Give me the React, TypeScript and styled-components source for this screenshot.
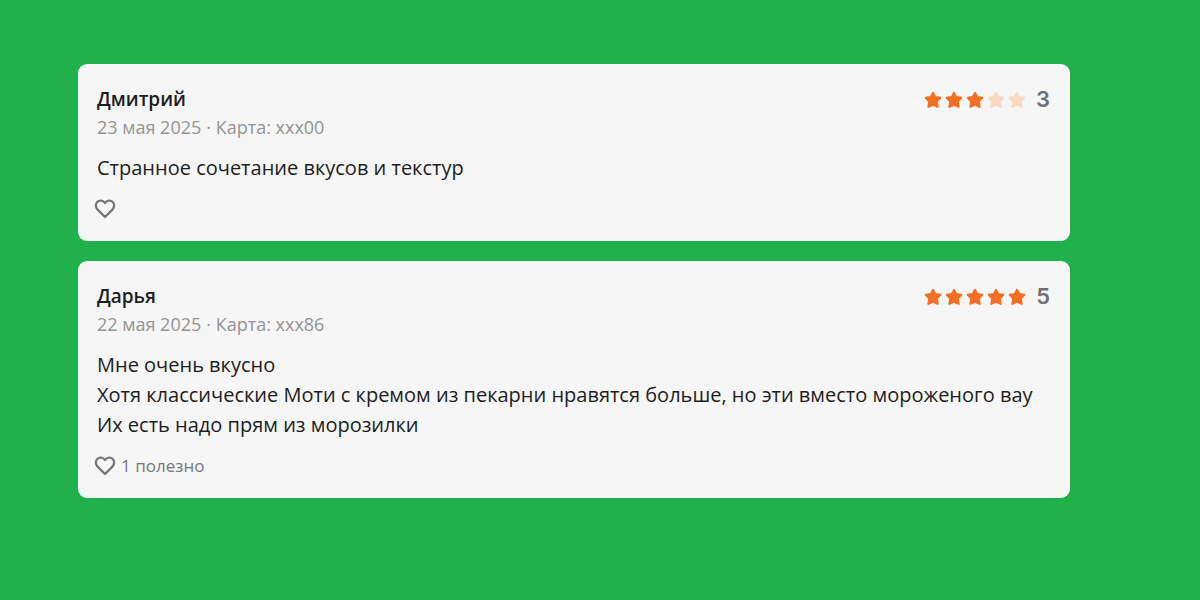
import React from "react";
import styled, { createGlobalStyle } from "styled-components";

const GlobalStyle = createGlobalStyle`
  *, *::before, *::after { box-sizing: border-box; }
  body {
    margin: 0;
    background: #21b14c;
    color: #1d1d1f;
    font-family: "Open Sans", "Noto Sans", sans-serif;
  }
`;

const ReviewList = styled.main`
  display: flex;
  flex-direction: column;
  gap: 20px;
  padding: 64px 130px 64px 78px;
`;

const Card = styled.article`
  padding: 21px 20px 20px 19px;
  border-radius: 9px;
  background: #f6f6f6;
`;

const CardHeader = styled.header`
  display: flex;
  justify-content: space-between;
  align-items: flex-start;
`;

const Author = styled.h2`
  margin: 0;
  font-size: 19px;
  line-height: 28px;
  font-weight: 600;
`;

const Meta = styled.p`
  display: flex;
  gap: 5px;
  margin: 0;
  color: #949494;
  font-size: 18px;
  line-height: 28px;
`;

const Rating = styled.div`
  display: flex;
  align-items: center;
  height: 28px;
`;

const Stars = styled.span`
  display: flex;
  gap: 3px;
  margin: 2px 10px 0 0;
`;

const StarIcon = styled.svg<{ $filled: boolean }>`
  display: block;
  width: 18px;
  height: 18px;
  color: ${(p) => (p.$filled ? "#f36f24" : "#f9d9c1")};
`;

const Score = styled.span`
  color: #6f6f73;
  font-family: Inter, "Liberation Sans", sans-serif;
  font-size: 22px;
  line-height: 28px;
  font-weight: 600;
`;

const Body = styled.p`
  margin: 12px 0 14px;
  font-size: 20px;
  line-height: 30px;
  white-space: pre-line;
`;

const LikeButton = styled.button`
  display: flex;
  align-items: center;
  gap: 4px;
  height: 24px;
  margin: 0 0 0 -4px;
  padding: 0;
  border: 0;
  background: none;
  color: #777;
  font-family: inherit;
  font-size: 17px;
  line-height: 24px;
  cursor: pointer;
`;

type Review = {
  author: string;
  date: string;
  card: string;
  rating: number;
  text: string;
  likes: number;
};

const reviews: Review[] = [
  {
    author: "Дмитрий",
    date: "23 мая 2025",
    card: "xxx00",
    rating: 3,
    text: "Странное сочетание вкусов и текстур",
    likes: 0,
  },
  {
    author: "Дарья",
    date: "22 мая 2025",
    card: "xxx86",
    rating: 5,
    text: "Мне очень вкусно\nХотя классические Моти с кремом из пекарни нравятся больше, но эти вместо мороженого вау\nИх есть надо прям из морозилки",
    likes: 1,
  },
];

function Star({ filled }: { filled: boolean }) {
  return (
    <StarIcon $filled={filled} viewBox="0 0 18 18" aria-hidden="true">
      <path
        d="M9 1.8 11.2 6 16.3 6.8 12.8 10.7 13.7 15.9 9 13.8 4.3 15.9 5.2 10.7 1.7 6.8 6.8 6Z"
        fill="currentColor"
        stroke="currentColor"
        strokeWidth="2"
        strokeLinejoin="round"
      />
    </StarIcon>
  );
}

function Heart() {
  return (
    <svg width="24" height="24" viewBox="0 0 24 24" aria-hidden="true">
      <path
        d="M12 20 4.6 12.6C2.4 10.3 2.3 6.9 4.2 5 6.4 2.8 10.2 3.1 12 6 13.8 3.1 17.6 2.8 19.8 5 21.7 6.9 21.6 10.3 19.4 12.6Z"
        fill="none"
        stroke="currentColor"
        strokeWidth="2.3"
        strokeLinecap="round"
        strokeLinejoin="round"
      />
    </svg>
  );
}

function ReviewCard({ review }: { review: Review }) {
  return (
    <Card>
      <CardHeader>
        <div>
          <Author>{review.author}</Author>
          <Meta>
            <span>{review.date}</span>
            <span>· Карта: {review.card}</span>
          </Meta>
        </div>
        <Rating>
          <Stars>
            {[1, 2, 3, 4, 5].map((n) => (
              <Star key={n} filled={n <= review.rating} />
            ))}
          </Stars>
          <Score>{review.rating}</Score>
        </Rating>
      </CardHeader>
      <Body>{review.text}</Body>
      <LikeButton type="button" aria-label="Полезно">
        <Heart />
        {review.likes > 0 && <span>{review.likes} полезно</span>}
      </LikeButton>
    </Card>
  );
}

export default function App() {
  return (
    <>
      <GlobalStyle />
      <ReviewList>
        {reviews.map((review) => (
          <ReviewCard key={review.author} review={review} />
        ))}
      </ReviewList>
    </>
  );
}
